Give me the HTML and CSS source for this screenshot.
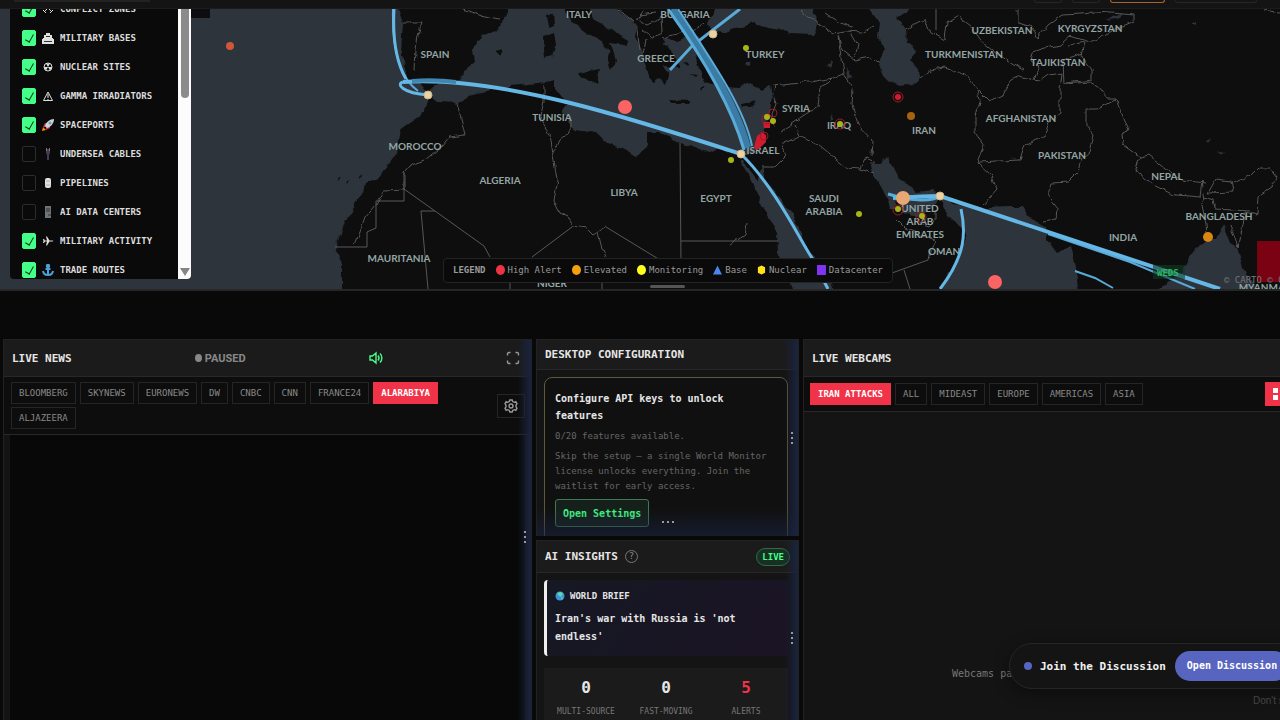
FILE: index.html
```html
<!DOCTYPE html>
<html lang="en">
<head>
    <meta charset="UTF-8">
    <meta name="viewport" content="width=device-width, initial-scale=1.0">
    <title>World Monitor</title>
    <link rel="stylesheet" href="styles.css">
</head>
<body>
    <header class="topbar">
        <span class="topbar-search"></span>
        <span class="topbar-tools"><i></i><i></i><i class="hot"></i><i class="wide"></i></span>
    </header>

    <section class="map">
        <svg class="map-canvas" viewBox="0 9 1280 280" preserveAspectRatio="xMinYMin slice">
            <defs>
                <filter id="rough" x="-5%" y="-5%" width="110%" height="110%" color-interpolation-filters="sRGB">
                    <feTurbulence type="fractalNoise" baseFrequency="0.1" numOctaves="2" seed="4"/>
                    <feDisplacementMap in="SourceGraphic" scale="6" xChannelSelector="R" yChannelSelector="G"/>
                </filter>
            </defs>
            <rect class="land" x="0" y="0" width="1280" height="300"/>

            <g class="sea" filter="url(#rough)">
                <!-- Atlantic -->
                <path d="M-10 0H395L403 23 402 37 401 55 406 72 404 80 420 82 427 91 427 100 422 115 400 130 396 153 380 177 367 183 353 207 343 227 335 250 342 263 342 300H-10Z"/>
                <!-- Mediterranean -->
                <path d="M426 93 433 87 445 79 460 80 467 68 475 62 473 50 483 35 500 28 502 20 507 14 507 0H562L567 14 573 23 587 33 600 40 610 50 607 60 610 70 616 60 613 50 610 42 618 43 625 47 627 42 618 34 607 28 593 20 590 9 588 0H612L620 12 632 20 637 27 635 37 642 50 644 60 648 73 653 83 659 78 665 85 668 74 663 66 680 67 674 55 668 47 662 44 664 37 677 42 697 35 702 42 695 50 698 63 702 77 712 85 727 87 740 88 750 83 762 90 770 85 772 97 770 113 763 133 755 150 747 155 737 155 720 148 710 152 695 148 680 143 660 132 647 132 647 145 637 157 620 148 607 143 597 133 575 130 569 126 568 117 562 112 568 103 562 98 555 89 555 80 547 82 520 85 500 87 487 91 468 95 460 103 437 102Z"/>
                <!-- Black Sea -->
                <path d="M718 0 714 12 708 22 712 30 722 33 737 28 753 23 768 27 780 29 790 33 813 34 818 25 813 9 811 0Z"/>
                <!-- Caspian -->
                <path d="M865 0 870 10 880 23 878 37 885 50 878 63 883 75 890 82 900 86 919 83 918 68 910 60 917 50 908 43 907 30 897 18 909 10 907 0Z"/>
                <!-- Red Sea -->
                <path d="M741 160 744 160 756 181 763 167 765 169 765 180 783 200 797 223 807 250 827 267 836 300H795L788 275 778 253 777 233 763 207 753 185Z"/>
                <!-- Persian Gulf and Arabian Sea -->
                <path d="M870 162 880 164 888 158 898 178 917 192 933 190 942 195 953 203 970 205 985 208 1010 207 1023 207 1030 218 1047 227 1047 240 1057 253 1070 246 1075 267 1080 300H935L955 262 966 240 963 228 948 217 940 197 933 207 917 217 903 213 898 197 895 210 890 210 887 197 873 173Z"/>
                <!-- Bay of Bengal -->
                <path d="M1145 300 1183 270 1193 250 1207 240 1217 240 1223 225 1230 243 1237 247 1243 267 1252 283 1255 300Z"/>
                <!-- inland lakes -->
                <path d="M1105 20 1122 12 1118 19ZM825 66 833 60 831 67ZM846 66 852 77 847 79ZM1190 23l5 -3v5ZM1205 141l6 -2-2 4ZM1218 152l6 -2-3 4ZM830 112l3 8-2 1ZM744 62 751 62 747 65Z"/>
            </g>

            <g class="island" filter="url(#rough)">
                <path d="M547 15 553 13 554 26 549 28ZM543 36 554 32 556 46 553 57 545 59ZM577 73 600 69 597 84 582 78ZM495 51 503 49 500 55ZM669 100 690 101 689 104 671 104ZM742 104 756 100 751 107 743 107ZM337 178l4 -2-3 5ZM346 181l3 -1-2 4ZM358 177l3 -3-1 5ZM700 88l5 -3-3 6ZM690 74l7 1-2 2ZM683 61l6 1-2 3Z"/>
            </g>

            <g class="border" filter="url(#rough)">
                <path d="M403 23 422 23 418 35 416 50 415 70M464 9 480 15 500 19M457 103 462 122 465 135 449 137 443 145 425 160 410 165 404 172 404 190 384 191 376 205 365 218 355 246M544 84 544 100 540 120 550 134 553 155 560 140 570 133 570 117M553 155 557 180 553 200 560 214 569 218 574 226 586 228 593 235 606 227M598 232 601 245 606 257"/>
                <path d="M618 9 634 22M637 30 640 50M645 9 637 20 648 25 662 18 663 32 650 37 642 30M640 14 655 12M663 38 680 33 692 31 704 22M646 40 643 55M772 85 790 83 810 82 833 78 843 74 840 50 838 36M775 85 773 93 776 105 772 115 774 127M833 78 828 83 820 87 818 107 780 132M795 125 799 136 781 145 787 155 775 167 762 167M799 136 818 145 846 168 860 169 875 174M860 169 866 158 875 162M843 74 853 88 852 105 858 125 872 140 871 155M800 9 820 25 833 33 845 31 862 32 873 26M826 14 838 22 852 27M838 35 842 50 855 60 870 57 880 63M850 31 858 45 855 57M919 78 930 70 945 68 966 75 978 90 980 100 975 115 975 132 984 145 977 162 991 175 996 190 983 205M907 30 917 22 925 20 930 32 945 40 947 23 958 16 970 25 983 43 998 55 1023 70"/>
                <path d="M979 90 990 101 1003 95 1011 80 1020 76 1034 80 1040 81 1048 75 1062 73 1060 90 1060 112 1050 120 1045 135 1025 145 1020 160 978 162M1018 9 1018 22 1030 25 1038 38 1048 25 1062 15 1080 14 1110 12 1135 14 1135 22 1120 28 1105 35 1090 42 1070 36 1060 45 1045 48 1033 52 1031 60 1040 65 1035 80M1068 45 1085 42 1082 55 1092 70 1092 80 1065 83M1083 53 1063 60 1064 84 1090 82 1100 88 1108 99 1117 99 1098 109 1086 109 1086 125 1094 135 1090 152 1083 158 1078 172 1068 182 1052 183 1048 195 1058 208 1057 219 1042 221M1117 99 1122 113 1129 130 1122 133 1123 145 1140 157 1149 155 1165 168 1182 180 1205 183M1140 157 1135 172 1148 182 1175 195 1200 197 1202 181 1205 200 1202 205 1206 225 1207 235M1208 193 1216 179 1231 181 1233 192 1208 193M1233 183 1250 176 1258 168 1270 168 1277 177 1272 187 1258 196 1257 215 1245 212 1240 240 1238 247 1230 225M1205 197 1213 200 1215 209 1250 211M892 215 905 228M918 222 930 226 935 220 935 210M905 228 935 240 930 258M1265 10 1280 13M730 245 745 235 747 222"/>
            </g>
            <g class="border">
                <path d="M404 172V201H376V228L367 232V247H335M404 189 435 211 484 246 490 257M435 211H421L428 289M532 257 572 227M606 227 665 263M680 143 681 263M681 241H778M510 280V289M602 280V289M892 273 928 260 930 250M904 270 910 289M936 9V30"/>
            </g>

            <g class="labels">
                <text x="579" y="18">ITALY</text>
                <text x="685" y="18">BULGARIA</text>
                <text x="435" y="58">SPAIN</text>
                <text x="656" y="62">GREECE</text>
                <text x="765" y="58">TURKEY</text>
                <text x="552" y="121">TUNISIA</text>
                <text x="415" y="150">MOROCCO</text>
                <text x="500" y="184">ALGERIA</text>
                <text x="624" y="196">LIBYA</text>
                <text x="716" y="202">EGYPT</text>
                <text x="399" y="262">MAURITANIA</text>
                <text x="552" y="287">NIGER</text>
                <text x="796" y="112">SYRIA</text>
                <text x="839" y="129">IRAQ</text>
                <text x="763" y="154">ISRAEL</text>
                <text x="924" y="134">IRAN</text>
                <text x="824" y="202">SAUDI<tspan x="824" dy="13">ARABIA</tspan></text>
                <text x="920" y="212">UNITED<tspan x="920" dy="13">ARAB</tspan><tspan x="920" dy="13">EMIRATES</tspan></text>
                <text x="944" y="255">OMAN</text>
                <text x="1002" y="34">UZBEKISTAN</text>
                <text x="1090" y="32">KYRGYZSTAN</text>
                <text x="964" y="58">TURKMENISTAN</text>
                <text x="1058" y="66">TAJIKISTAN</text>
                <text x="1021" y="122">AFGHANISTAN</text>
                <text x="1062" y="159">PAKISTAN</text>
                <text x="1167" y="180">NEPAL</text>
                <text x="1219" y="220">BANGLADESH</text>
                <text x="1123" y="241">INDIA</text>
                <text x="1265" y="291">MYANMAR</text>
            </g>

            <!-- trade routes -->
            <g class="route">
                <path class="thin" d="M393 9C392 50 400 78 418 91M1048 234 1130 262 1195 289M1075 271 1095 278 1113 288"/>
                <path class="mid" d="M670 70 692 46 740 9"/>
                <path class="deep" d="M672 9C708 60 737 108 747 148"/>
                <path class="mid" d="M668 9C706 62 733 112 744 150"/>
                <path class="thin" d="M678 9C708 55 744 106 752 146"/>
                <path d="M394 9C392 45 398 65 406 79M428 95C402 93 396 84 403 82M741 154C775 187 800 240 812 258L828 289M961 209C966 232 966 255 940 289"/>
                <path class="thick" d="M403 82C500 75 640 121 741 154"/>
                <path class="fade" d="M412 81C425 80 440 80 456 82"/>
                <path class="mid" d="M888 194C908 200 930 203 940 196"/>
                <path class="thick" d="M893 198C915 197 928 196 940 196L1220 289"/>
            </g>

            <g class="spots">
                <circle class="port" cx="428" cy="95" r="4"/>
                <circle class="port" cx="713" cy="34" r="4"/>
                <circle class="port" cx="741" cy="154" r="4"/>
                <circle class="port" cx="940" cy="196" r="4"/>
                <circle class="hub" cx="903" cy="198" r="7"/>
                <circle class="alert" cx="625" cy="107" r="7"/>
                <circle class="alert" cx="995" cy="282" r="7"/>
                <circle class="fire" cx="230" cy="46" r="4"/>
                <circle class="amber" cx="1208" cy="237" r="5"/>
                <circle class="amber dim" cx="911" cy="116" r="4"/>
                <circle class="ring" cx="898" cy="97" r="5"/>
                <circle class="core" cx="898" cy="97" r="3"/>
                <circle class="ring" cx="840" cy="124" r="5"/>
                <circle class="ring" cx="773" cy="113" r="4"/>
                <circle class="ring" cx="898" cy="210" r="5"/>
                <circle class="ring" cx="921" cy="217" r="5"/>
                <path class="core" d="M757 136l5 -4 4 3v7l-4 4-5 4-3 -3ZM763 122h7v6h-6Z"/>
                <circle class="ring" cx="764" cy="136" r="4"/>
                <circle class="ring" cx="767" cy="119" r="5"/>
                <circle class="watch" cx="767" cy="117" r="3"/>
                <circle class="watch" cx="773" cy="121" r="3"/>
                <circle class="watch" cx="746" cy="48" r="3"/>
                <circle class="watch" cx="731" cy="160" r="3"/>
                <circle class="watch" cx="859" cy="214" r="3"/>
                <circle class="watch" cx="840" cy="124" r="3"/>
                <circle class="watch" cx="898" cy="209" r="3"/>
                <circle class="watch" cx="922" cy="216" r="3"/>
            </g>
            <rect class="zone" x="1257" y="241" width="40" height="41"/>
            <rect class="tag" x="1153" y="265" width="32" height="14"/>
            <text class="tag-text" x="1157" y="276">WEDS</text>
            <text class="credit" x="1224" y="283">© CARTO © OpenStreetMap</text>
        </svg>

        <div class="layers">
            <div class="layers-list">
                <label class="layer"><input type="checkbox" checked><svg viewBox="0 0 12 12"><path class="ln" d="M2 1 10 9M10 1 2 9M1 7 4 10M11 7 8 10"/></svg>CONFLICT ZONES</label>
                <label class="layer"><input type="checkbox" checked><svg viewBox="0 0 12 12"><path class="fl" d="M4 1H8V3H10V6H11V7H1V6H2V3H4ZM0 7H12V12H0Z"/><path class="dk" d="M4 4.500H8M2 9.500H10"/></svg>MILITARY BASES</label>
                <label class="layer"><input type="checkbox" checked><svg viewBox="0 0 12 12"><circle class="ln" cx="6" cy="6" r="4"/><path class="fl" d="M6 6 4 2.500H8ZM6 6 2 6 4 9.500ZM6 6 10 6 8 9.500Z"/></svg>NUCLEAR SITES</label>
                <label class="layer"><input type="checkbox" checked><svg viewBox="0 0 12 12"><path class="ln" d="M6 2 10.500 10.500H1.500ZM6 4V8M6 9V10"/></svg>GAMMA IRRADIATORS</label>
                <label class="layer"><input type="checkbox" checked><svg viewBox="0 0 12 12"><path fill="#dd2e44" d="M1 8 3 4 6 4 8 7 8 9 4 11 4 8Z"/><path fill="#c7d5df" d="M3 7C4 3 8 0 12 0 12 4 9 8 5 9Z"/><circle cx="8" cy="4" r="1.500" fill="#7b96aa"/><path fill="#f4900c" d="M0 12 1 8 4 11Z"/></svg>SPACEPORTS</label>
                <label class="layer"><input type="checkbox"><svg viewBox="0 0 12 12"><path fill="#453b55" d="M4 1H8V5L7 7V12H5V7L4 5Z"/><path fill="#8a7068" d="M4 0H5V3H4ZM7 0H8V3H7Z"/></svg>UNDERSEA CABLES</label>
                <label class="layer"><input type="checkbox"><svg viewBox="0 0 12 12"><rect class="fl" x="3" y="1" width="6" height="10" rx="2"/><path stroke="#aaa" d="M4 4H8M4 8H8"/></svg>PIPELINES</label>
                <label class="layer"><input type="checkbox"><svg viewBox="0 0 12 12"><rect fill="#6d757b" x="3" y="0" width="6" height="12"/><path class="dk" d="M4 3H8M4 5H8M6 9H9"/></svg>AI DATA CENTERS</label>
                <label class="layer"><input type="checkbox" checked><svg viewBox="0 0 12 12"><path class="fl" d="M1 4H2L3 5.500H5L4 1.500H5L7.500 5.500H10.500L11.500 6 10.500 6.500H7.500L5 10.500H4L5 6.500H3L2 8H1L1.500 6Z"/></svg>MILITARY ACTIVITY</label>
                <label class="layer"><input type="checkbox" checked><svg viewBox="0 0 12 12"><path class="anchor" d="M6 3V11M3.500 5H8.500M1 7C1.500 10 4 11 6 11S10.500 10 11 7"/><circle class="anchor" cx="6" cy="2" r="1.200"/></svg>TRADE ROUTES</label>
            </div>
            <div class="scrollbar"><span class="thumb"></span><span class="arrow"></span></div>
        </div>
        <span class="layers-tab"></span>

        <div class="legend">
            <b>LEGEND</b>
            <span><i class="high"></i>High Alert</span>
            <span><i class="elevated"></i>Elevated</span>
            <span><i class="monitoring"></i>Monitoring</span>
            <span><svg viewBox="0 0 10 10"><path fill="#4a86f0" d="M5 0 10 10H0Z"/></svg>Base</span>
            <span><svg viewBox="0 0 10 10"><path fill="#ffe21a" d="M5 0 9 2V8L5 10 1 8V2Z"/></svg>Nuclear</span>
            <span><i class="square"></i>Datacenter</span>
        </div>
        <span class="map-grip"></span>
    </section>

    <main class="panels">
        <section class="panel news">
            <div class="panel-head tall">
                <h2>LIVE NEWS</h2>
                <button class="paused"><i></i>PAUSED</button>
                <button class="icon-btn sound" aria-label="Sound"><svg viewBox="0 0 14 14"><path d="M1 5H3.500L7 2V12L3.500 9H1ZM9 4.500C10.200 6 10.200 8 9 9.500M11 2.500C13.500 5 13.500 9 11 11.500"/></svg></button>
                <button class="icon-btn" aria-label="Fullscreen"><svg viewBox="0 0 14 14"><path d="M1.500 4.500V3Q1.500 1.500 3 1.500H4.500M9.500 1.500H11Q12.500 1.500 12.500 3V4.500M12.500 9.500V11Q12.500 12.500 11 12.500H9.500M4.500 12.500H3Q1.500 12.500 1.500 11V9.500"/></svg></button>
            </div>
            <div class="bar">
                <div class="tabs">
                    <button>BLOOMBERG</button>
                    <button>SKYNEWS</button>
                    <button>EURONEWS</button>
                    <button>DW</button>
                    <button>CNBC</button>
                    <button>CNN</button>
                    <button>FRANCE24</button>
                    <button class="active">ALARABIYA</button>
                    <button>ALJAZEERA</button>
                </div>
                <button class="settings" aria-label="Channel settings"><svg viewBox="0 0 14 14"><path d="M5.800 1H8.200L8.700 2.600 10.300 3.300 11.800 2.700 13 4.800 12 6.200V7.800L13 9.200 11.800 11.300 10.300 10.700 8.700 11.400 8.200 13H5.800L5.300 11.400 3.700 10.700 2.200 11.300 1 9.200 2 7.800V6.200L1 4.800 2.200 2.700 3.700 3.300 5.300 2.600Z"/><circle cx="7" cy="7" r="2"/></svg></button>
            </div>
            <div class="video"></div>
            <span class="edge"><i></i></span>
        </section>

        <div class="column">
            <section class="panel config">
                <div class="panel-head"><h2>DESKTOP CONFIGURATION</h2></div>
                <div class="panel-body">
                    <div class="card">
                        <h3>Configure API keys to unlock features</h3>
                        <p>0/20 features available.</p>
                        <p>Skip the setup — a single World Monitor license unlocks everything. Join the waitlist for early access.</p>
                        <button class="open-settings">Open Settings</button>
                    </div>
                </div>
                <span class="edge"><i></i></span>
                <span class="edge-bottom"><i></i></span>
            </section>

            <section class="panel insights">
                <div class="panel-head mid">
                    <h2>AI INSIGHTS</h2>
                    <button class="help" aria-label="Help">?</button>
                    <span class="live">LIVE</span>
                </div>
                <div class="panel-body">
                    <div class="brief">
                        <h4><svg viewBox="0 0 10 10"><circle cx="5" cy="5" r="4.500" fill="#3b94d9"/><path fill="#5fd6a4" d="M2 2 6 1 8 3 6 6 4 5ZM6 7 8 6 7 9Z"/></svg>WORLD BRIEF</h4>
                        <p>Iran's war with Russia is 'not endless'</p>
                    </div>
                    <div class="stats">
                        <div><strong>0</strong><span>MULTI-SOURCE</span></div>
                        <div><strong>0</strong><span>FAST-MOVING</span></div>
                        <div><strong class="red">5</strong><span>ALERTS</span></div>
                    </div>
                </div>
                <span class="edge"><i></i></span>
            </section>
        </div>

        <section class="panel webcams">
            <div class="panel-head tall"><h2>LIVE WEBCAMS</h2></div>
            <div class="bar">
                <div class="tabs">
                    <button class="active">IRAN ATTACKS</button>
                    <button>ALL</button>
                    <button>MIDEAST</button>
                    <button>EUROPE</button>
                    <button>AMERICAS</button>
                    <button>ASIA</button>
                </div>
                <button class="grid-btn" aria-label="Grid view"><svg viewBox="0 0 12 12"><path d="M0 0H5V5H0ZM7 0H12V5H7ZM0 7H5V12H0ZM7 7H12V12H7Z"/></svg></button>
            </div>
            <p class="webcams-note">Webcams paused</p>
        </section>
    </main>

    <aside class="toast">
        <i></i>
        <b>Join the Discussion</b>
        <a href="#discussion">Open Discussion</a>
    </aside>
    <a class="dismiss" href="#dismiss">Don't show again</a>
</body>
</html>
```
FILE: styles.css
```css
* {
    box-sizing: border-box;
}

body {
    margin: 0;
    height: 100vh;
    display: flex;
    flex-direction: column;
    overflow: hidden;
    position: relative;
    background: #090909;
    color: #e6e6e6;
    font-family: "DejaVu Sans Mono", "Liberation Mono", monospace;
    font-size: 9px;
}

h2, h3, h4, p {
    margin: 0;
}

button {
    font-family: inherit;
    font-size: 9px;
    padding: 0;
    background: none;
    border: none;
    color: #888;
    cursor: pointer;
}

/* Top bar */
.topbar {
    height: 9px;
    flex: none;
    display: flex;
    justify-content: space-between;
    background: #141414;
    border-bottom: 1px solid #1c1c1c;
    overflow: hidden;
}

.topbar-search {
    width: 136px;
    height: 2px;
    margin-left: 14px;
    background: #222;
}

.topbar-tools {
    display: flex;
    gap: 10px;
    padding-right: 23px;
}

.topbar-tools i {
    width: 28px;
    height: 3px;
    border: 1px solid #262626;
    border-top: none;
    border-radius: 0 0 3px 3px;
}

.topbar-tools .hot {
    width: 55px;
    border-color: #a8642a;
}

.topbar-tools .wide {
    width: 82px;
}

/* Map */
.map {
    position: relative;
    height: 282px;
    flex: none;
    border-bottom: 2px solid #262626;
    overflow: hidden;
}

.map-canvas {
    display: block;
    width: 100%;
    height: 100%;
}

.land, .island {
    fill: #0e0e0e;
}

.sea {
    fill: #2d343c;
}

.border {
    fill: none;
    stroke: #585858;
    stroke-width: 1;
}

.labels text {
    font-family: Lato, "Open Sans", sans-serif;
    font-size: 10px;
    font-weight: bold;
    fill: #93a5a5;
    text-anchor: middle;
}

.route {
    fill: none;
    stroke: #65b7e6;
    stroke-width: 3;
}

.route .thin {
    stroke-width: 2;
    stroke: #5aaad8;
}

.route .mid {
    stroke: #5aaad8;
}

.route .deep {
    stroke-width: 8;
    stroke: #3a7ca6;
}

.route .fade {
    stroke-width: 4;
    stroke: #3f86b0;
}

.route .thick {
    stroke-width: 4;
}

.port {
    fill: #ecd2a0;
    stroke: #c9b48c;
}

.hub {
    fill: #e8a873;
}

.alert {
    fill: #fa6464;
}

.fire {
    fill: #cf5637;
}

.amber {
    fill: #d98512;
}

.dim {
    fill: #a5620f;
}

.ring {
    fill: none;
    stroke: #a01828;
}

.core {
    fill: #d01c30;
}

.watch {
    fill: #a9b515;
}

.zone {
    fill: #7a0212;
}

.tag {
    fill: #0f3a26;
    opacity: 0.6;
}

.tag-text {
    font-size: 9px;
    font-weight: bold;
    fill: #28b85c;
}

.credit {
    font-size: 9px;
    fill: #777;
}

/* Layer list */
.layers {
    position: absolute;
    top: 0;
    left: 10px;
    width: 181px;
    height: 270px;
    display: flex;
    overflow: hidden;
    border-radius: 0 0 4px 4px;
    background: #0a0a0a;
}

.layers-list {
    flex: 1;
    margin-top: -15px;
}

.layer {
    display: flex;
    align-items: center;
    height: 29px;
    padding-left: 12px;
    font-weight: bold;
    color: #dcdcdc;
    white-space: nowrap;
}

.layer svg {
    width: 12px;
    height: 12px;
    margin: 0 6px;
}

.layer input {
    appearance: none;
    position: relative;
    flex: none;
    width: 14px;
    height: 16px;
    margin: 0;
    border: 1px solid #2c2c2c;
    border-radius: 2px;
}

.layer input:checked {
    background: #44ff88;
    border-color: #44ff88;
}

.layer input:checked::after {
    content: "";
    position: absolute;
    left: 4px;
    top: 2px;
    width: 4px;
    height: 8px;
    border: solid #0d3a1e;
    border-width: 0 1px 1px 0;
    transform: rotate(30deg);
}

.fl {
    fill: #e0e0e0;
}

.ln {
    fill: none;
    stroke: #e0e0e0;
}

.dk {
    fill: none;
    stroke: #333;
}

.anchor {
    fill: none;
    stroke: #4aa3d8;
    stroke-width: 2;
}

.scrollbar {
    width: 13px;
    display: flex;
    flex-direction: column;
    align-items: center;
    justify-content: space-between;
    background: #fcfcfc;
}

.thumb {
    width: 8px;
    height: 89px;
    border-radius: 0 0 4px 4px;
    background: #8b8b8b;
}

.arrow {
    border: 5px solid transparent;
    border-top: 8px solid #858585;
    border-bottom: none;
    margin-bottom: 3px;
}

.layers-tab {
    position: absolute;
    top: 0;
    left: 191px;
    width: 19px;
    height: 9px;
    background: #0d0d0f;
}

.legend {
    position: absolute;
    left: 50%;
    bottom: 6px;
    transform: translateX(-50%);
    margin-left: 28px;
    display: flex;
    align-items: center;
    gap: 10px;
    height: 25px;
    padding: 0 9px 2px;
    border: 1px solid #232323;
    border-radius: 4px;
    background: #0a0a0a;
    color: #9a9a9a;
    white-space: nowrap;
}

.legend span {
    display: flex;
    align-items: center;
    gap: 3px;
}

.legend i, .legend svg {
    width: 9px;
    height: 10px;
}

.legend i {
    border-radius: 50%;
}

.legend .high {
    background: #ee3344;
}

.legend .elevated {
    background: #f5a00c;
}

.legend .monitoring {
    background: #ffff1a;
}

.legend .square {
    background: #8033f0;
    border-radius: 0;
}

.map-grip {
    position: absolute;
    left: 50%;
    bottom: 1px;
    width: 35px;
    height: 3px;
    margin-left: 10px;
    border-radius: 2px;
    background: #555;
}

/* Panels */
.panels {
    flex: 1;
    min-height: 0;
    display: grid;
    grid-template-columns: 1fr 263px 1fr;
    gap: 4px;
    margin: 48px -52px 0 3px;
}

.panel {
    position: relative;
    display: flex;
    flex-direction: column;
    min-width: 0;
    overflow: hidden;
    background: #141414;
    border: 1px solid #222;
    border-bottom: none;
}

.column {
    display: flex;
    flex-direction: column;
    gap: 4px;
    min-width: 0;
    min-height: 0;
}

.panel-head {
    flex: none;
    display: flex;
    align-items: center;
    height: 30px;
    padding: 0 8px;
    background: #1b1b1b;
    border-bottom: 1px solid #282828;
}

.panel-head.tall {
    height: 37px;
    justify-content: space-between;
    padding-right: 11px;
}

.panel-head.mid {
    height: 32px;
}

.panel-head h2 {
    font-size: 11px;
    font-weight: bold;
}

.paused {
    display: flex;
    align-items: center;
    gap: 3px;
    font-family: Roboto, "Liberation Sans", sans-serif;
    font-size: 11px;
    font-weight: bold;
}

.paused i {
    width: 7px;
    height: 8px;
    border-radius: 50%;
    background: #888;
}

.icon-btn svg, .settings svg {
    display: block;
    width: 14px;
    height: 14px;
    fill: none;
    stroke: #999;
    stroke-width: 1.4;
}

.sound svg {
    stroke: #44ff88;
}

.bar {
    flex: none;
    display: flex;
    justify-content: space-between;
    align-items: center;
    padding: 5px 6px 5px 7px;
    background: #0d0d0d;
    border-bottom: 1px solid #282828;
}

.tabs {
    display: flex;
    flex-wrap: wrap;
    gap: 3px 4px;
}

.tabs button {
    height: 22px;
    padding: 0 7px;
    border: 1px solid #252525;
}

.tabs .active {
    background: #f03348;
    border-color: #f03348;
    color: #fff;
    font-weight: bold;
}

.settings {
    flex: none;
    width: 28px;
    height: 24px;
    padding-left: 6px;
    border: 1px solid #252525;
}

.video {
    flex: 1;
    margin: 0 6px;
    background: #080808;
}

.edge {
    position: absolute;
    top: 0;
    right: 0;
    bottom: 0;
    width: 13px;
    display: flex;
    align-items: center;
    justify-content: center;
    background: linear-gradient(90deg, transparent, #1a2440);
}

.edge i {
    width: 2px;
    height: 12px;
    background: repeating-linear-gradient(#999 0 2px, transparent 2px 5px);
}

/* these panels run on below the fold */
.news .edge, .insights .edge {
    bottom: -14px;
}

.edge-bottom {
    position: absolute;
    left: 0;
    right: 0;
    bottom: 0;
    height: 28px;
    display: flex;
    align-items: center;
    justify-content: center;
    background: linear-gradient(transparent, #1a244099);
}

.edge-bottom i {
    width: 12px;
    height: 2px;
    background: repeating-linear-gradient(90deg, #999 0 2px, transparent 2px 5px);
}

.config {
    height: 197px;
    flex: none;
}

.insights {
    flex: 1;
}

.panel-body {
    padding: 7px 10px 0 7px;
}

.card {
    height: 180px;
    padding: 12px 20px 12px 10px;
    border: 1px solid #5d5a3c;
    border-radius: 8px;
    background: #101010;
}

.card h3 {
    font-size: 10px;
    line-height: 17px;
}

.card p {
    margin-top: 5px;
    line-height: 15px;
    color: #666;
}

.open-settings {
    margin-top: 5px;
    height: 28px;
    padding: 0 7px;
    border: 1px solid #3f7a56;
    border-radius: 3px;
    background: #16201a;
    color: #44ff88;
    font-size: 10px;
    font-weight: bold;
}

.help {
    width: 13px;
    height: 13px;
    margin-left: 7px;
    border: 1px solid #777;
    border-radius: 50%;
    line-height: 11px;
}

.live {
    margin-left: auto;
    padding: 3px 5px;
    border: 1px solid #2f6b47;
    border-radius: 10px;
    background: #173023;
    color: #44ff88;
    font-weight: bold;
}

.brief {
    height: 76px;
    padding: 9px 9px 0 8px;
    border-left: 3px solid #eee;
    border-radius: 4px;
    background: linear-gradient(120deg, #161824, #1b1424);
}

.brief h4 {
    display: flex;
    align-items: center;
    gap: 5px;
    height: 13px;
    font-size: 9px;
}

.brief svg {
    width: 10px;
    height: 10px;
}

.brief p {
    margin-top: 8px;
    font-size: 10px;
    font-weight: bold;
    line-height: 18px;
}

.stats {
    display: grid;
    grid-template-columns: repeat(3, 1fr);
    margin-top: 12px;
    padding: 10px 2px;
    background: #1b1b1b;
    text-align: center;
}

.stats strong, .stats span {
    display: block;
}

.stats strong {
    font-size: 16px;
    line-height: 20px;
}

.stats span {
    margin-top: 9px;
    font-size: 8px;
    color: #777;
}

.stats .red {
    color: #f03348;
}

.webcams .bar {
    height: 35px;
    padding-left: 6px;
}

.grid-btn {
    width: 28px;
    height: 24px;
    margin-right: 32px;
    background: #f03348;
}

.grid-btn svg {
    display: block;
    width: 12px;
    height: 12px;
    margin-left: 8px;
    fill: #fff;
}

.webcams-note {
    margin: auto 0 40px 148px;
    font-size: 10px;
    line-height: 12px;
    color: #777;
}

/* Discussion toast */
.toast {
    position: absolute;
    left: calc(100% - 271px);
    bottom: 31px;
    display: flex;
    align-items: center;
    height: 46px;
    padding: 0 12px 0 14px;
    border: 1px solid #262626;
    border-radius: 23px;
    background: #141414;
    box-shadow: 0 4px 16px rgba(0, 0, 0, 0.4);
    color: #f0f0f0;
    font-size: 11px;
    white-space: nowrap;
}

.toast i {
    width: 8px;
    height: 8px;
    margin-right: 8px;
    border-radius: 50%;
    background: #5865c0;
}

.toast a {
    margin-left: 9px;
    padding: 0 12px;
    border-radius: 15px;
    background: #5865c0;
    color: #fff;
    font-size: 10px;
    font-weight: bold;
    line-height: 30px;
    text-decoration: none;
}

.dismiss {
    position: absolute;
    left: calc(100% - 27px);
    bottom: 14px;
    font-family: "Liberation Sans", Roboto, sans-serif;
    font-size: 10px;
    color: #444;
    text-decoration: none;
    white-space: nowrap;
}
```
